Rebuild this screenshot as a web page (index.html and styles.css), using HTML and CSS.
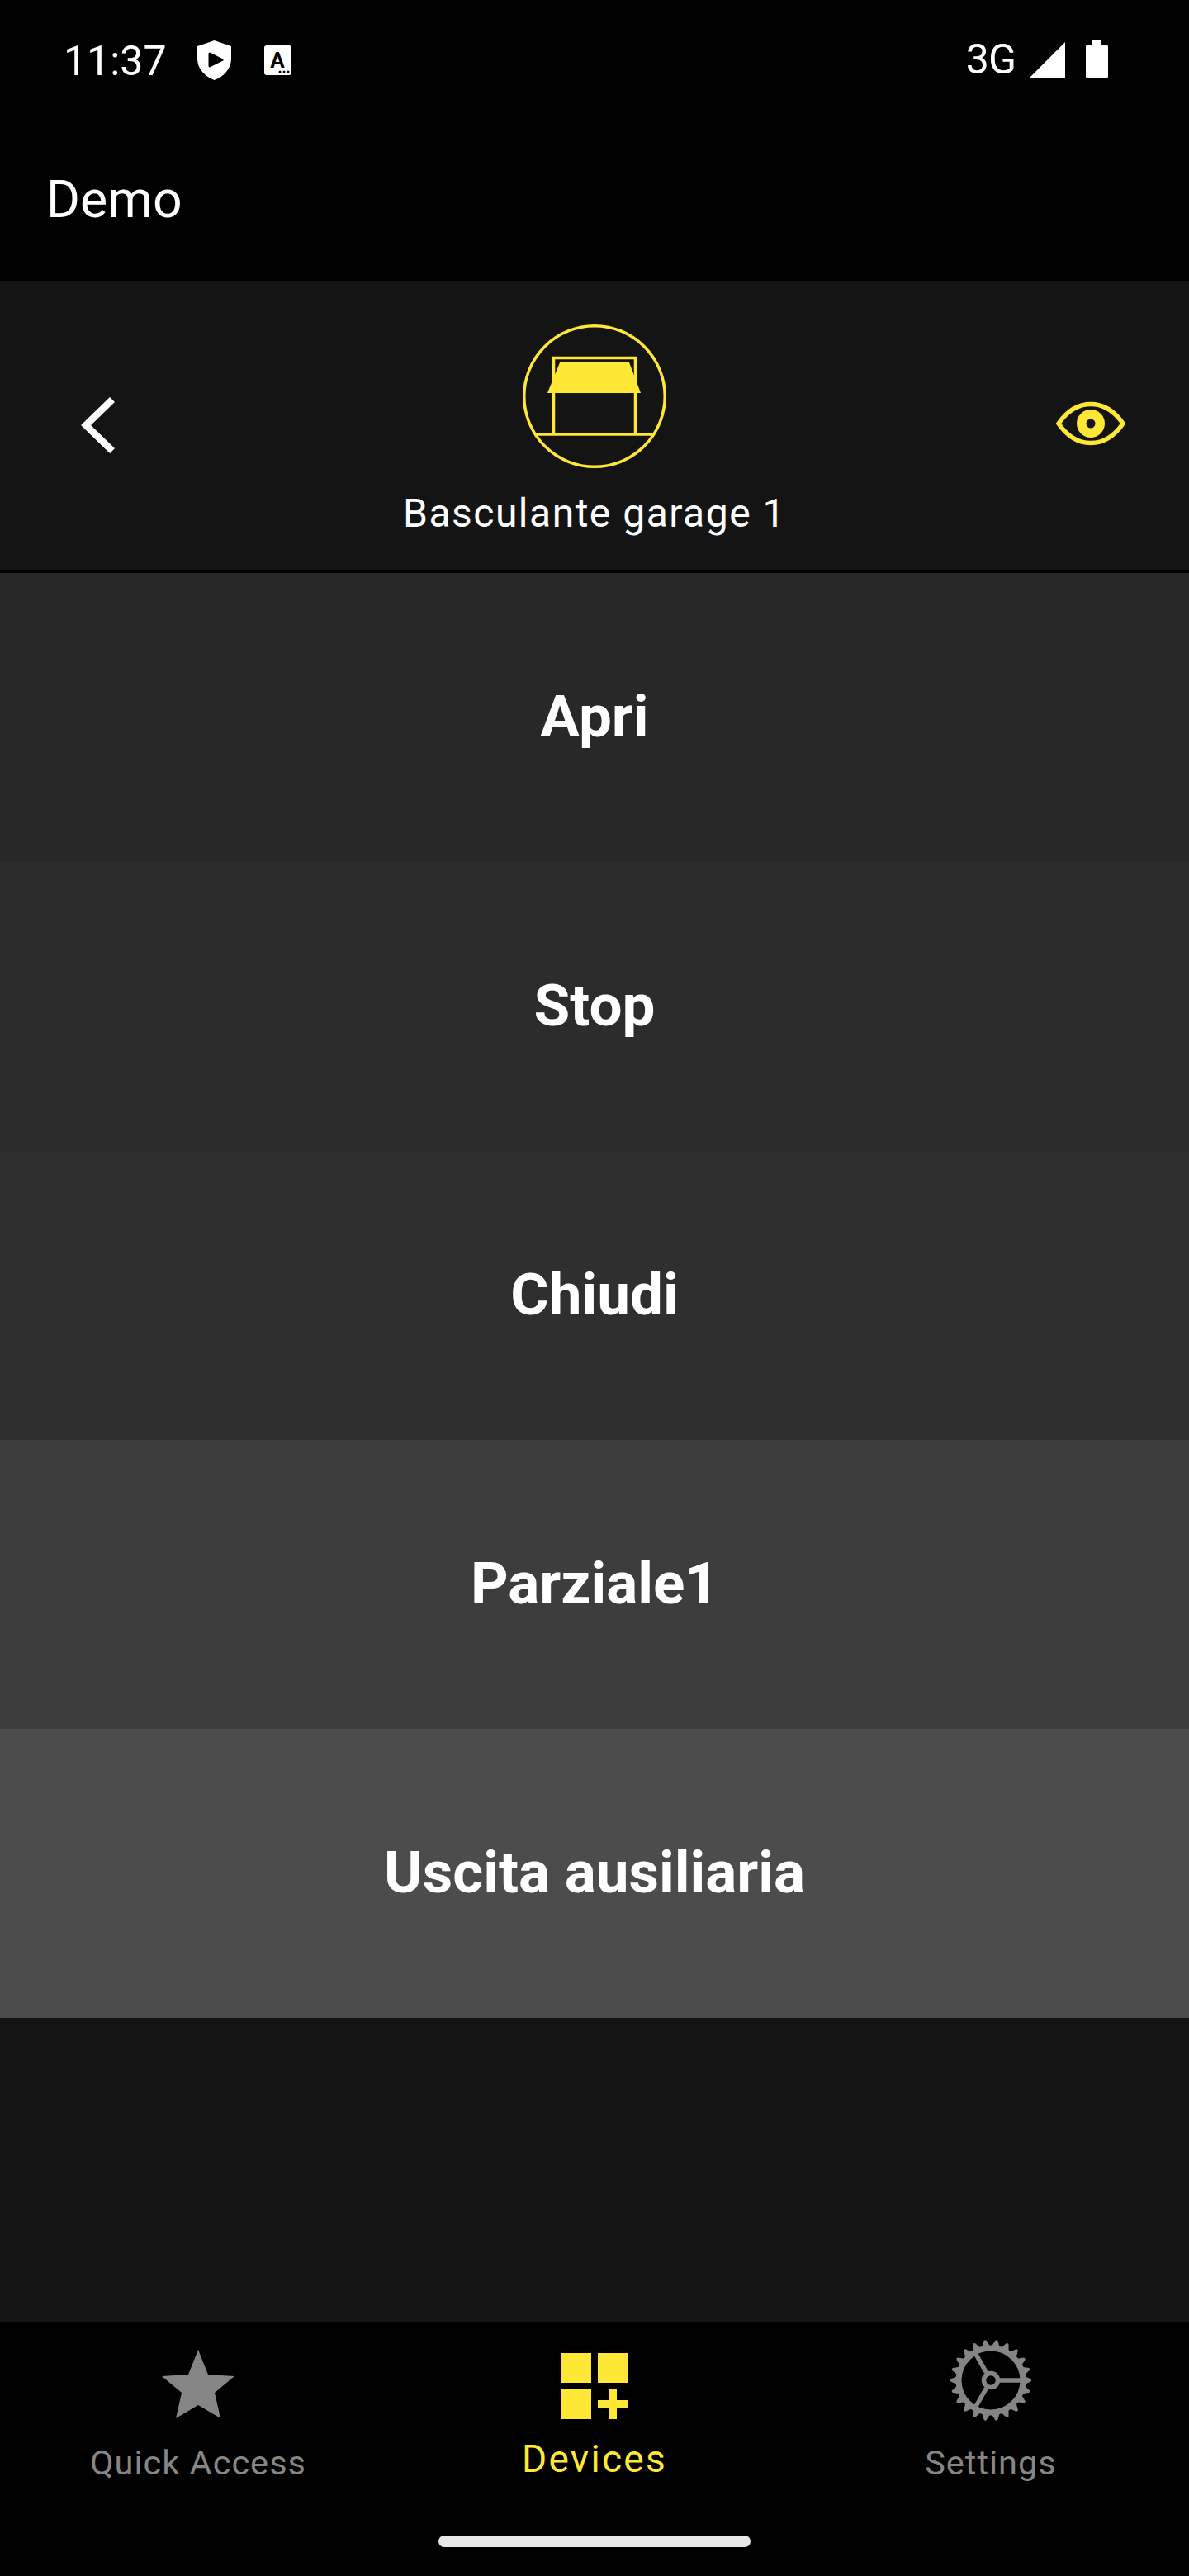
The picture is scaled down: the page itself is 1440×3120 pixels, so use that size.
FILE: index.html
```html
<!DOCTYPE html>
<html lang="en">
<head>
    <meta charset="utf-8">
    <title>Demo</title>
    <link rel="stylesheet" href="styles.css">
</head>
<body>
    <div class="status-bar">
        <div class="status-left">
            <span class="clock">11:37</span>
            <svg class="shield-icon" viewBox="0 0 41 48" aria-hidden="true">
                <path fill="#fff" d="M20.500 0 41 7V22C41 34 32 44 20.500 48 9 44 0 34 0 22V7Z"/>
                <path fill="#000" stroke="#000" stroke-width="3" stroke-linejoin="round" d="M15 16V31L30 23.500Z"/>
            </svg>
            <svg class="font-icon" viewBox="0 0 33 36" aria-hidden="true">
                <rect width="33" height="36" rx="3" fill="#fff"/>
                <text class="font-icon-letter" x="16" y="27" text-anchor="middle">A</text>
                <circle cx="19" cy="32" r="1.500" fill="#000"/>
                <circle cx="24" cy="32" r="1.500" fill="#000"/>
                <circle cx="29" cy="32" r="1.500" fill="#000"/>
            </svg>
        </div>
        <div class="status-right">
            <span class="network">3G</span>
            <svg class="signal-icon" viewBox="0 0 44 44" aria-hidden="true">
                <path fill="#fff" d="M44 0V44H0Z"/>
            </svg>
            <svg class="battery-icon" viewBox="0 0 27 46" aria-hidden="true">
                <path fill="#fff" d="M8 0H19V5H24Q27 5 27 8V43Q27 46 24 46H3Q0 46 0 43V8Q0 5 3 5H8Z"/>
            </svg>
        </div>
    </div>

    <header class="app-bar">Demo</header>

    <section class="device-header">
        <button class="back-btn" aria-label="Back">
            <svg viewBox="0 0 44 68" aria-hidden="true">
                <path fill="none" stroke="#fff" stroke-width="8.500" d="M38 3 6 34 38 65"/>
            </svg>
        </button>
        <div class="device-info">
            <svg class="device-icon" viewBox="0 0 174 174" aria-hidden="true">
                <circle cx="87" cy="87" r="85.250" fill="none" stroke="#ffe835" stroke-width="3.500"/>
                <path fill="none" stroke="#ffe835" stroke-width="3.500" d="M37.500 132V40.500H136.500V132M16 133H157"/>
                <path fill="#ffe835" d="M45 46H129L143 83H30Z"/>
            </svg>
            <span class="device-name">Basculante garage 1</span>
        </div>
        <button class="eye-btn" aria-label="Show">
            <svg viewBox="0 0 84 54" aria-hidden="true">
                <path fill="none" stroke="#ffe835" stroke-width="5.500" d="M3 27C14 11 27 3.500 42 3.500S70 11 81 27C70 43 57 50.500 42 50.500S14 43 3 27Z"/>
                <circle cx="42" cy="27" r="17" fill="#ffe835"/>
                <circle cx="42" cy="27" r="5.500" fill="#141414"/>
            </svg>
        </button>
    </section>

    <main class="commands">
        <button class="command shade-1">Apri</button>
        <button class="command shade-2">Stop</button>
        <button class="command shade-3">Chiudi</button>
        <button class="command shade-4">Parziale1</button>
        <button class="command shade-5">Uscita ausiliaria</button>
    </main>

    <nav class="tab-bar">
        <a class="tab">
            <svg class="star-icon" viewBox="0 0 88 83" aria-hidden="true">
                <path fill="#858585" d="M44 0 56 30 88 32 64 52 71 83 44 67 17 83 24 52 0 32 32 30Z"/>
            </svg>
            <span>Quick Access</span>
        </a>
        <a class="tab tab-active">
            <svg class="grid-icon" viewBox="0 0 80 80" aria-hidden="true">
                <path fill="#ffe835" d="M0 0H36V36H0ZM44 0H80V36H44ZM0 44H36V80H0ZM57 44H67V57H80V67H67V80H57V67H44V57H57Z"/>
            </svg>
            <span>Devices</span>
        </a>
        <a class="tab tab-settings">
            <svg class="gear-icon" viewBox="0 0 100 100" aria-hidden="true">
                <defs>
                    <path id="gear-tooth" fill="#858585" d="M45 9 48.500 1.500Q50 0 51.500 1.500L55 9Z"/>
                </defs>
                <g fill="none" stroke="#858585">
                    <circle cx="50" cy="50" r="39" stroke-width="7"/>
                    <circle cx="50" cy="50" r="8.500" stroke-width="5.500"/>
                    <path stroke-width="5.500" d="M61 50H86M44.500 40.500 30 15M44.500 59.500 30 85"/>
                </g>
                <use href="#gear-tooth" transform="rotate(90 50 50)"/>
                <use href="#gear-tooth" transform="rotate(106.360 50 50)"/>
                <use href="#gear-tooth" transform="rotate(122.730 50 50)"/>
                <use href="#gear-tooth" transform="rotate(139.090 50 50)"/>
                <use href="#gear-tooth" transform="rotate(155.450 50 50)"/>
                <use href="#gear-tooth" transform="rotate(171.820 50 50)"/>
                <use href="#gear-tooth" transform="rotate(188.180 50 50)"/>
                <use href="#gear-tooth" transform="rotate(204.550 50 50)"/>
                <use href="#gear-tooth" transform="rotate(220.910 50 50)"/>
                <use href="#gear-tooth" transform="rotate(237.270 50 50)"/>
                <use href="#gear-tooth" transform="rotate(253.640 50 50)"/>
                <use href="#gear-tooth" transform="rotate(270 50 50)"/>
                <use href="#gear-tooth" transform="rotate(286.360 50 50)"/>
                <use href="#gear-tooth" transform="rotate(302.730 50 50)"/>
                <use href="#gear-tooth" transform="rotate(319.090 50 50)"/>
                <use href="#gear-tooth" transform="rotate(335.450 50 50)"/>
                <use href="#gear-tooth" transform="rotate(351.820 50 50)"/>
                <use href="#gear-tooth" transform="rotate(8.180 50 50)"/>
                <use href="#gear-tooth" transform="rotate(24.550 50 50)"/>
                <use href="#gear-tooth" transform="rotate(40.910 50 50)"/>
                <use href="#gear-tooth" transform="rotate(57.270 50 50)"/>
                <use href="#gear-tooth" transform="rotate(73.640 50 50)"/>
            </svg>
            <span>Settings</span>
        </a>
        <div class="home-indicator"></div>
    </nav>
</body>
</html>
```
FILE: styles.css
```css
* {
    box-sizing: border-box;
}
html, body {
    margin: 0;
    padding: 0;
}
body {
    width: 1440px;
    height: 3120px;
    display: flex;
    flex-direction: column;
    background: #141414;
    color: #fff;
    font-family: Roboto, "Noto Sans", sans-serif;
}
button {
    border: none;
    padding: 0;
    background: none;
    color: inherit;
    font-family: inherit;
}

.status-bar {
    height: 140px;
    padding: 44px 98px 0 77px;
    display: flex;
    align-items: flex-start;
    justify-content: space-between;
    background: #000;
}
.status-left, .status-right {
    display: flex;
    align-items: center;
    height: 60px;
}
.clock {
    font-size: 50px;
    line-height: 60px;
}
.shield-icon {
    width: 41px;
    height: 48px;
    margin: 0 0 2px 37px;
}
.font-icon {
    width: 33px;
    height: 36px;
    margin: 0 0 2px 40px;
}
.font-icon-letter {
    font-size: 26px;
    font-weight: 700;
    fill: #000;
}
.network {
    font-size: 50px;
    line-height: 60px;
    letter-spacing: -1px;
    margin-bottom: 4px;
}
.signal-icon {
    width: 44px;
    height: 44px;
    margin: 0 0 2px 16px;
}
.battery-icon {
    width: 27px;
    height: 46px;
    margin: 0 0 4px 25px;
}

.app-bar {
    height: 200px;
    padding: 65px 56px 0;
    font-size: 62.500px;
    line-height: 73px;
    background: #000;
}

.device-header {
    height: 354px;
    padding: 0 77px;
    display: grid;
    grid-template-columns: 1fr auto 1fr;
    align-items: center;
    border-bottom: 4px solid #000;
}
.back-btn {
    justify-self: start;
    width: 44px;
    height: 68px;
    margin-left: 21px;
}
.back-btn svg, .eye-btn svg {
    display: block;
    width: 100%;
    height: 100%;
}
.device-info {
    display: flex;
    flex-direction: column;
    align-items: center;
    margin-top: 13px;
}
.device-icon {
    width: 174px;
    height: 174px;
}
.device-name {
    margin-top: 27px;
    font-size: 48px;
    line-height: 56px;
    letter-spacing: 1.500px;
}
.eye-btn {
    justify-self: end;
    width: 84px;
    height: 54px;
    margin-bottom: 5px;
}

.commands {
    flex: 1;
    display: flex;
    flex-direction: column;
}
.command {
    height: 350px;
    width: 100%;
    padding-bottom: 3px;
    font-size: 71px;
    font-weight: 700;
    text-align: center;
}
.shade-1 { background: #282828; }
.shade-2 { background: #2c2c2c; }
.shade-3 { background: #2f2f2f; }
.shade-4 { background: #3d3d3d; }
.shade-5 { background: #4c4c4c; }

.tab-bar {
    position: relative;
    height: 308px;
    display: flex;
    background: #000;
}
.tab {
    flex: 1;
    padding-top: 34px;
    display: flex;
    flex-direction: column;
    align-items: center;
    color: #858585;
    font-size: 41.500px;
    line-height: 50px;
    letter-spacing: 1px;
}
.tab-active {
    padding-top: 38px;
    color: #ffe835;
    font-size: 46px;
    line-height: 54px;
    letter-spacing: 2.300px;
}
.tab-settings {
    padding-top: 21px;
}
.star-icon {
    width: 88px;
    height: 83px;
    margin-bottom: 29px;
}
.grid-icon {
    width: 80px;
    height: 80px;
    margin-bottom: 21px;
}
.gear-icon {
    width: 100px;
    height: 100px;
    margin-bottom: 25px;
}
.home-indicator {
    position: absolute;
    left: 531px;
    bottom: 35px;
    width: 378px;
    height: 14px;
    border-radius: 7px;
    background: #e8e8e8;
}
```
